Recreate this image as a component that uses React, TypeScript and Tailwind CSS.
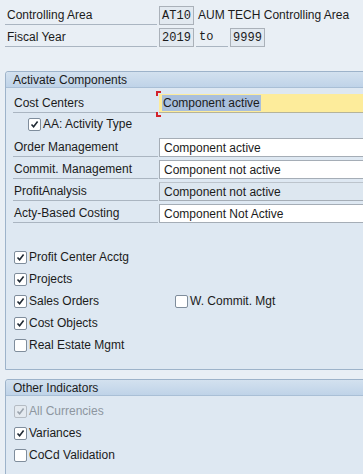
import React from 'react'

const sans = { fontFamily: '"Liberation Sans", Arial, sans-serif' }
const mono = { fontFamily: '"Liberation Mono", "Courier New", monospace' }

function Check({ checked, disabled }: { checked?: boolean; disabled?: boolean }) {
  return (
    <span
      className={`inline-flex w-[13px] h-[13px] shrink-0 items-center justify-center rounded-[2px] border ${
        disabled ? 'border-[#b5bcc4] bg-[#e4eaf0]' : 'border-[#7f8d9c] bg-white'
      }`}
    >
      {checked && (
        <svg width="9" height="9" viewBox="0 0 9 9">
          <path d="M1.5 4.5 L3.6 6.8 L7.6 1.6" fill="none" stroke={disabled ? '#9aa3ad' : '#1f2933'} strokeWidth="1.6" />
        </svg>
      )}
    </span>
  )
}

function CheckRow({ label, checked, disabled }: { label: string; checked?: boolean; disabled?: boolean }) {
  return (
    <div className="flex items-center gap-[2px] h-[22px]">
      <Check checked={checked} disabled={disabled} />
      <span className={disabled ? 'text-[#8d969f]' : 'text-[#1b1b1b]'}>{label}</span>
    </div>
  )
}

function FieldRow({ label, value, readOnly }: { label: string; value: string; readOnly?: boolean }) {
  return (
    <div className="flex items-end h-[22px]">
      <div className="w-[145px] shrink-0 h-[21px] border-b border-[#aab5c1] pl-[1px] flex items-end pb-[3px]">{label}</div>
      <div
        className={`ml-[1px] w-[260px] shrink-0 h-[19px] border border-[#a5adb6] px-[4px] flex items-center ${
          readOnly ? 'bg-[#dde7f0] border-t-[#bcc4cc]' : 'bg-white'
        }`}
      >
        {value}
      </div>
    </div>
  )
}

function GroupHeader({ title }: { title: string }) {
  return (
    <div className="h-[16px] bg-gradient-to-b from-[#d3e1ef] to-[#bfd3e8] border-b border-[#a9bfd6] pl-[7px] flex items-center rounded-tl-[3px]">
      {title}
    </div>
  )
}

export default function App() {
  return (
    <div className="w-[363px] h-[474px] overflow-hidden bg-[#e9eff5] text-[12px] text-[#1b1b1b] leading-none" style={sans}>
      <div className="pl-[5px] pt-[6px]">
        <div className="flex items-end h-[19px]">
          <div className="w-[152px] shrink-0 h-[19px] border-b border-[#aab5c1] pl-[2px] flex items-end pb-[3px]">Controlling Area</div>
          <div className="ml-[2px] w-[35px] h-[19px] border border-[#aab1b9] bg-[#e2e9f0] flex items-center justify-center" style={mono}>AT10</div>
          <span className="ml-[4px] pb-[4px]">AUM TECH Controlling Area</span>
        </div>
        <div className="flex items-end h-[19px] mt-[3px]">
          <div className="w-[152px] shrink-0 h-[19px] border-b border-[#aab5c1] pl-[2px] flex items-end pb-[3px]">Fiscal Year</div>
          <div className="ml-[2px] w-[35px] h-[19px] border border-[#aab1b9] bg-[#e2e9f0] flex items-center justify-center" style={mono}>2019</div>
          <div className="ml-[2px] w-[32px] h-[19px] border-b border-[#aab5c1] pl-[3px] flex items-center" style={mono}>to</div>
          <div className="ml-[2px] w-[35px] h-[19px] border border-[#aab1b9] bg-[#e2e9f0] flex items-center justify-center" style={mono}>9999</div>
        </div>
      </div>

      <div className="ml-[5px] mt-[24px] w-[420px] border border-[#9db3ca] rounded-tl-[3px] bg-[#dee8f2]">
        <GroupHeader title="Activate Components" />
        <div className="pl-[7px] pt-[3px] pb-[13px]">
          <div className="flex items-end h-[22px]">
            <div className="w-[145px] shrink-0 h-[21px] border-b border-[#aab5c1] pl-[1px] flex items-end pb-[3px]">Cost Centers</div>
            <div className="relative ml-[1px] w-[260px] shrink-0 h-[19px] bg-[#fdec9b] border-b border-[#b5b39a] px-[3px] flex items-center">
              <span className="absolute left-[-3px] top-[-3px] w-[5px] h-[5px] border-l-2 border-t-2 border-[#d3222a]" />
              <span className="absolute left-[-3px] bottom-[-5px] w-[5px] h-[5px] border-l-2 border-b-2 border-[#d3222a]" />
              <span className="bg-[#a9bfdc] px-[1px] py-[2px]">Component active</span>
            </div>
          </div>
          <div className="pl-[15px]">
            <CheckRow label="AA: Activity Type" checked />
          </div>
          <FieldRow label="Order Management" value="Component active" />
          <FieldRow label="Commit. Management" value="Component not active" />
          <FieldRow label="ProfitAnalysis" value="Component not active" readOnly />
          <FieldRow label="Acty-Based Costing" value="Component Not Active" />

          <div className="mt-[23px] pl-[1px]">
            <CheckRow label="Profit Center Acctg" checked />
            <CheckRow label="Projects" checked />
            <div className="flex">
              <div className="w-[161px]">
                <CheckRow label="Sales Orders" checked />
              </div>
              <CheckRow label="W. Commit. Mgt" />
            </div>
            <CheckRow label="Cost Objects" checked />
            <CheckRow label="Real Estate Mgmt" />
          </div>
        </div>
      </div>

      <div className="ml-[5px] mt-[9px] w-[420px] h-[120px] border border-[#9db3ca] rounded-tl-[3px] bg-[#dee8f2]">
        <GroupHeader title="Other Indicators" />
        <div className="pl-[8px] pt-[4px]">
          <CheckRow label="All Currencies" checked disabled />
          <CheckRow label="Variances" checked />
          <CheckRow label="CoCd Validation" />
        </div>
      </div>
    </div>
  )
}
